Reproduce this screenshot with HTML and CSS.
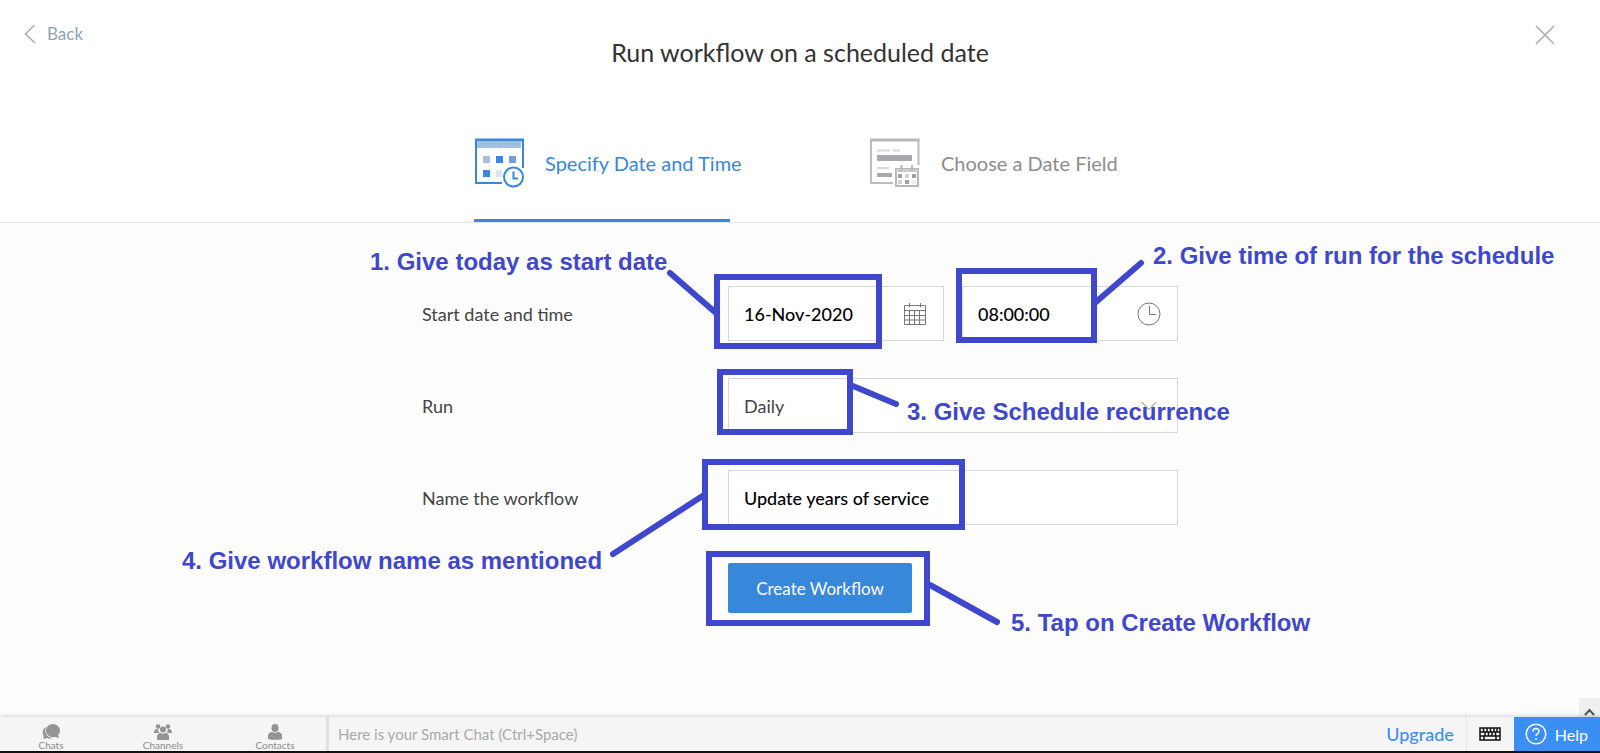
FILE: index.html
```html
<!DOCTYPE html>
<html lang="en">

<head>
    <meta charset="UTF-8">
    <meta name="viewport" content="width=device-width, initial-scale=1.0">
    <title>Run workflow on a scheduled date</title>
    <link rel="stylesheet" href="styles.css">
</head>

<body>
    <header class="header">
        <div class="top-bar">
            <a class="back" href="#">
                <svg width="12" height="20" viewBox="0 0 12 20"><path d="M10.500 1L1.500 10l9.500 9" /></svg>
                Back
            </a>
            <h1 class="title">Run workflow on a scheduled date</h1>
            <button class="close" aria-label="Close">
                <svg width="20" height="20" viewBox="0 0 20 20"><path d="M1 1l18 18M19 1L1 19" /></svg>
            </button>
        </div>
        <nav class="tabs">
            <a class="tab active" href="#">
                <svg width="50" height="50" viewBox="0 0 50 50">
                    <path d="M3 4h44v6H3z" fill="#a3c1de" />
                    <path d="M6 6h40" stroke="#7ba3cc" stroke-dasharray="1 2" />
                    <path d="M2 45V1.500M49 1.500V30M1 45h27" fill="none" stroke="#3787db" stroke-width="2" />
                    <path d="M1 2h49" stroke="#3787db" stroke-width="3" />
                    <path d="M9 18h7v7H9z" fill="#a3c1de" />
                    <path d="M22 18h7v7h-7zM9 32h7v7H9z" fill="#3787db" />
                    <path d="M35 18h7v7h-7z" fill="#749fd9" />
                    <path d="M22 32h6v7h-6z" fill="#dbe5f2" />
                    <circle cx="39.500" cy="39" r="11.500" fill="#fff" />
                    <circle cx="39.500" cy="39" r="9.500" fill="none" stroke="#3787db" stroke-width="2" />
                    <path d="M39.500 33.500V40.500h4.500" fill="none" stroke="#3787db" stroke-width="2" />
                </svg>
                Specify Date and Time
            </a>
            <a class="tab" href="#">
                <svg width="50" height="50" viewBox="0 0 50 50">
                    <path d="M1 45.500V1M48.500 1v26M1 45h22" fill="none" stroke="#bcbcbc" stroke-width="2" />
                    <path d="M0 2h49.500" stroke="#b8b8b8" stroke-width="3" />
                    <path d="M7 12.500h13M23 12.500h7M7 30h12" stroke="#d8d8d8" stroke-width="2" />
                    <path d="M7 17h35v6H7zM7 35h15v4H7z" fill="#a9a9ad" />
                    <path d="M26 31h22v17H26z" fill="#fff" stroke="#b8b8b8" stroke-width="2" />
                    <path d="M26 31h22v3H26z" fill="#ccc" />
                    <path d="M31.500 27v6M42 27v6" stroke="#b8b8b8" stroke-width="2" />
                    <path d="M28 36h4v4h-4zM42 36h4v4h-4zM35 42h4v4h-4z" fill="#a0a0a0" />
                    <path d="M35 36h4v4h-4zM28 42h4v4h-4z" fill="#d2d2d2" />
                    <path d="M42 42h4v4h-4z" fill="#eee" />
                </svg>
                Choose a Date Field
            </a>
        </nav>
    </header>

    <main class="content">
        <form class="form">
            <div class="row">
                <label for="start-date">Start date and time</label>
                <div class="fields">
                    <div class="field">
                        <input type="text" id="start-date" value="16-Nov-2020">
                        <svg width="24" height="24" viewBox="0 0 24 24">
                            <path d="M1.500 3.500h21v19h-21zM1.500 8.500h21M1.500 13.500h21M1.500 18h21M6.500 8.500v14M11.500 8.500v14M16.500 8.500v14M6.500 1v4M17.500 1v4" />
                        </svg>
                    </div>
                    <div class="field">
                        <input type="text" id="start-time" value="08:00:00" aria-label="Start time">
                        <svg width="24" height="24" viewBox="0 0 24 24">
                            <circle cx="12" cy="12" r="11" />
                            <path d="M12.500 4v8.500H19" />
                        </svg>
                    </div>
                </div>
            </div>
            <div class="row">
                <label for="run">Run</label>
                <div class="fields">
                    <div class="field">
                        <select id="run">
                            <option>Daily</option>
                            <option>Weekly</option>
                            <option>Monthly</option>
                            <option>Yearly</option>
                        </select>
                        <svg width="24" height="24" viewBox="0 0 24 24"><path d="M4.500 8l7.500 7.500L19.500 8" /></svg>
                    </div>
                </div>
            </div>
            <div class="row">
                <label for="workflow-name">Name the workflow</label>
                <div class="fields">
                    <div class="field">
                        <input type="text" id="workflow-name" value="Update years of service">
                    </div>
                </div>
            </div>
            <div class="row">
                <div class="fields">
                    <button type="button" class="create">Create Workflow</button>
                </div>
            </div>
        </form>

        <!-- Step markers drawn over the form -->
        <div class="guide">
            <svg width="1600" height="490" viewBox="0 0 1600 490">
                <rect x="717" y="54" width="162" height="69" />
                <rect x="959" y="48" width="135" height="69" />
                <rect x="720" y="149" width="130" height="60" />
                <rect x="705" y="239" width="257" height="65" />
                <rect x="709" y="331" width="218" height="69" />
                <path d="M670 50l46 40M1141 40l-45 39M853 163l43 18M613 331l91-59M930 362l67 37" />
            </svg>
            <span class="step step-1">1. Give today as start date</span>
            <span class="step step-2">2. Give time of run for the schedule</span>
            <span class="step step-3">3. Give Schedule recurrence</span>
            <span class="step step-4">4. Give workflow name as mentioned</span>
            <span class="step step-5">5. Tap on Create Workflow</span>
        </div>

        <button class="expand" aria-label="Expand">
            <svg width="11" height="8" viewBox="0 0 11 8"><path d="M1 7l4.500-5L10 7" /></svg>
        </button>
    </main>

    <footer class="chat-bar">
        <nav class="chat-tabs">
            <a href="#">
                <svg width="18" height="16" viewBox="0 0 18 16">
                    <path d="M4 3C0 5 0 10 2 12l-1 3 4-1c2 1 4 1 5 0C5 13 2 9 4 3z" />
                    <path d="M10.500 0C15 0 18 3 18 6.500c0 2-1 3.500-2 4.500l1 3-4-1C8 14 4 11 4 6.500 4 3 7 0 10.500 0z" />
                </svg>
                Chats
            </a>
            <a href="#">
                <svg width="18" height="16" viewBox="0 0 18 16">
                    <circle cx="4" cy="2.500" r="2.300" />
                    <circle cx="14" cy="2.500" r="2.300" />
                    <circle cx="9" cy="5.500" r="3" />
                    <path d="M0 9c0-3 1-4 4-4 .5 2 .5 3 1.500 4zM18 9c0-3-1-4-4-4-.5 2-.5 3-1.500 4zM3 16v-3c0-2 1-4 4-4l2 1 2-1c3 0 4 2 4 4v3z" />
                </svg>
                Channels
            </a>
            <a href="#">
                <svg width="18" height="16" viewBox="0 0 18 16">
                    <ellipse cx="9" cy="4" rx="3.500" ry="4" />
                    <path d="M2 15v-3c0-3 2-4 4-4 2 1 4 1 6 0 2 0 4 1 4 4v3c0 1-14 1-14 0z" />
                </svg>
                Contacts
            </a>
        </nav>
        <input class="smart-chat" type="text" placeholder="Here is your Smart Chat (Ctrl+Space)" aria-label="Smart Chat">
        <a class="upgrade" href="#">Upgrade</a>
        <button class="keyboard" aria-label="Keyboard shortcuts">
            <svg width="22" height="14" viewBox="0 0 22 14">
                <path d="M1 1h20v12H1zM1 5h20M1 9h20M4.500 1v4M8 1v4M11.500 1v4M15 1v4M18 1v4M6 5v4M9.500 5v4M13 5v4M16.500 5v4M5 9v4M17 9v4" />
            </svg>
        </button>
        <button class="help">
            <svg width="22" height="22" viewBox="0 0 22 22">
                <circle cx="11" cy="11" r="9.800" />
                <path d="M8 8.500C8 4.500 14 4.500 14 8.300c0 2.200-3 2.400-3 4.700M11 15v2" />
            </svg>
            Help
        </button>
    </footer>
</body>

</html>
```
FILE: styles.css
```css
* {
    margin: 0;
    padding: 0;
    box-sizing: border-box;
}

body {
    font-family: Lato, sans-serif;
    font-size: 18px;
    background: #fdfdfd;
    color: #444;
    display: flex;
    flex-direction: column;
    min-height: 100vh;
}

a {
    color: inherit;
    text-decoration: none;
}

button,
input,
select {
    font: inherit;
    border: none;
    background: none;
    outline: none;
}

button {
    cursor: pointer;
}

svg {
    flex: none;
}

/* Header */
.header {
    background: #fff;
    border-bottom: 1px solid #e6e6e6;
}

.top-bar {
    display: grid;
    grid-template-columns: 1fr auto 1fr;
    align-items: start;
    padding: 24px 24px 0;
    height: 112px;
}

.back {
    display: flex;
    align-items: center;
    gap: 11px;
    font-size: 17px;
    line-height: 20px;
    color: #8fa3b5;
}

.back svg,
.close svg {
    fill: none;
    stroke: #aaa;
    stroke-width: 1.5;
}

.title {
    font-size: 25px;
    font-weight: 400;
    line-height: 30px;
    padding-top: 13px;
    color: #333;
}

.close {
    justify-self: end;
    padding: 1px 21px 0 0;
    line-height: 0;
}

.tabs {
    display: flex;
    justify-content: center;
    gap: 140px;
}

.tab {
    display: flex;
    align-items: center;
    gap: 21px;
    width: 256px;
    height: 110px;
    padding-bottom: 8px;
    font-size: 20px;
    white-space: nowrap;
    color: #8c8c8c;
}

.tab.active {
    color: #3787db;
    border-bottom: 3px solid #3787db;
    padding-bottom: 5px;
}

/* Form */
.content {
    flex: 1;
    position: relative;
    overflow: hidden;
    padding-top: 63px;
}

.form {
    width: 756px;
    margin: 0 auto;
    display: flex;
    flex-direction: column;
    gap: 37px;
}

.row {
    display: flex;
    justify-content: flex-end;
    align-items: center;
}

.row label {
    flex: 1;
}

.fields {
    display: flex;
    gap: 18px;
    width: 450px;
}

.field {
    flex: 1;
    display: flex;
    align-items: center;
    position: relative;
    height: 55px;
    background: #fff;
    border: 1px solid #d5d7da;
}

.field input,
.field select {
    width: 100%;
    height: 100%;
    padding: 0 15px;
    color: #000;
    font-weight: 500;
}

.field select {
    appearance: none;
    color: #444;
    font-weight: 400;
}

.field svg {
    position: absolute;
    right: 16px;
    pointer-events: none;
    fill: none;
    stroke: #777;
}

.create {
    width: 184px;
    height: 50px;
    margin-top: 1px;
    background: #3787db;
    border-radius: 2px;
    color: #fff;
    font-size: 17px;
}

/* Step markers */
.guide {
    position: absolute;
    top: 0;
    left: 50%;
    width: 1600px;
    margin-left: -800px;
    pointer-events: none;
}

.guide svg {
    display: block;
    fill: none;
    stroke: #3f48cc;
    stroke-width: 6;
    stroke-linecap: round;
}

.step {
    position: absolute;
    font: bold 24px/28px "Liberation Sans", Arial, sans-serif;
    color: #3f48cc;
    white-space: nowrap;
}

.step-1 {
    left: 370px;
    top: 25px;
}

.step-2 {
    left: 1153px;
    top: 19px;
}

.step-3 {
    left: 907px;
    top: 175px;
}

.step-4 {
    left: 182px;
    top: 324px;
}

.step-5 {
    left: 1011px;
    top: 386px;
}

.expand {
    position: absolute;
    right: 0;
    bottom: 0;
    width: 21px;
    height: 19px;
    background: #efefef;
}

.expand svg {
    fill: none;
    stroke: #555;
    stroke-width: 2;
}

/* Chat bar */
.chat-bar {
    display: flex;
    height: 36px;
    background: #f5f5f5;
    border-bottom: 2px solid #111;
    box-shadow: 0 0 5px rgba(0, 0, 0, 0.25);
    position: relative;
}

.chat-tabs {
    display: flex;
    justify-content: center;
    width: 329px;
    padding-top: 7px;
    border-right: 3px solid #e0e0e0;
    font-size: 10px;
    line-height: 11px;
    color: #8c8c8c;
}

.chat-tabs a {
    display: flex;
    flex: none;
    flex-direction: column;
    align-items: center;
    width: 112px;
}

.chat-tabs svg {
    fill: #949494;
}

.smart-chat {
    flex: 1;
    padding: 0 9px;
    font-size: 15px;
}

.smart-chat::placeholder {
    color: #aaa;
}

.upgrade {
    padding: 0 12px;
    line-height: 34px;
    font-weight: 500;
    color: #3a8ff5;
}

.keyboard {
    width: 48px;
    border-left: 1px solid #e8e8e8;
    line-height: 0;
}

.keyboard svg {
    fill: none;
    stroke: #111;
    stroke-width: 1.5;
}

.help {
    display: flex;
    align-items: center;
    gap: 8px;
    padding: 0 12px 0 11px;
    background: #3a8ff5;
    color: #fff;
    font-size: 16px;
}

.help svg {
    fill: none;
    stroke: #fff;
    stroke-width: 1.5;
}
```
